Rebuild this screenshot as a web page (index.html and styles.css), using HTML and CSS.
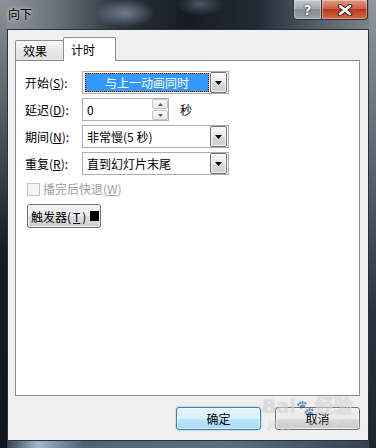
FILE: index.html
```html
<!doctype html>
<html lang="zh-CN">
<head>
    <meta charset="UTF-8">
    <title>向下</title>
    <link rel="stylesheet" href="styles.css">
</head>
<body>
<div class="window">
    <div class="titlebar">
        <span class="title">向下</span>
        <div class="caption">
            <span class="cap-btn cap-help">?</span>
            <span class="cap-btn cap-close">
                <svg width="16" height="12" viewBox="0 0 16 12">
                    <path d="M3 2 L13 10 M13 2 L3 10" stroke="#3a2a26" stroke-width="4.6" stroke-linecap="round"/>
                    <path d="M3 2 L13 10 M13 2 L3 10" stroke="#fff" stroke-width="2.6" stroke-linecap="round"/>
                </svg>
            </span>
        </div>
    </div>

    <div class="client">
        <div class="tabs">
            <div class="tab tab-off">效果</div>
            <div class="tab tab-on">计时</div>
        </div>

        <div class="panel">
            <div class="form">
                <label>开始(<u>S</u>):</label>
                <div class="combo">
                    <div class="combo-value selected">与上一动画同时</div>
                    <span class="drop"><svg width="7" height="4" viewBox="0 0 7 4"><path d="M0 0 H7 L3.5 4 Z" fill="#000"/></svg></span>
                </div>

                <label>延迟(<u>D</u>):</label>
                <div class="field-row">
                    <div class="spin">
                        <span class="spin-value">0</span>
                        <div class="spin-buttons">
                            <span class="spin-btn"><svg width="5" height="3" viewBox="0 0 5 3"><path d="M0 3 H5 L2.5 0 Z" fill="#4d6189"/></svg></span>
                            <span class="spin-btn"><svg width="5" height="3" viewBox="0 0 5 3"><path d="M0 0 H5 L2.5 3 Z" fill="#4d6189"/></svg></span>
                        </div>
                    </div>
                    <span class="unit">秒</span>
                </div>

                <label>期间(<u>N</u>):</label>
                <div class="combo">
                    <div class="combo-value">非常慢(5 秒)</div>
                    <span class="drop"><svg width="7" height="4" viewBox="0 0 7 4"><path d="M0 0 H7 L3.5 4 Z" fill="#000"/></svg></span>
                </div>

                <label>重复(<u>R</u>):</label>
                <div class="combo">
                    <div class="combo-value">直到幻灯片末尾</div>
                    <span class="drop"><svg width="7" height="4" viewBox="0 0 7 4"><path d="M0 0 H7 L3.5 4 Z" fill="#000"/></svg></span>
                </div>
            </div>

            <div class="check disabled">
                <span class="box"></span>
                <span>播完后快退(<u>W</u>)</span>
            </div>

            <button class="btn trigger" type="button">触发器(<u>T</u>) <span class="swatch"></span></button>
        </div>

        <div class="actions">
            <button class="btn btn-default" type="button">确定</button>
            <button class="btn" type="button">取消</button>
        </div>
    </div>

    <div class="watermark">Bai<span class="paw">&#x1F43E;</span>经验<small>jingyan.baidu.com</small></div>
</div>
</body>
</html>
```

FILE: styles.css
```css
* {
    box-sizing: border-box;
}

body {
    margin: 0;
    font-family: "Noto Sans CJK SC", "Microsoft YaHei", sans-serif;
    font-size: 12px;
    color: #000;
}

u {
    text-decoration: underline;
    text-underline-offset: 1px;
}

/* window frame (aero glass) */
.window {
    position: relative;
    width: 376px;
    height: 448px;
    display: flex;
    flex-direction: column;
    background:
        linear-gradient(#8c9298, #4a535c 30%, #161d25 55%, #0f151c) left top / 7px 100% no-repeat,
        linear-gradient(#8e979e, #5c6670 35%, #2a333d 70%, #1c242d) right top / 7px 100% no-repeat,
        linear-gradient(to right, #1c2631, #9fb6cc 10%, #4f6377 22%, #5b6e81 60%, #33414f) left bottom / 100% 7px no-repeat,
        radial-gradient(ellipse 30px 14px at 125px 13px, rgba(170, 190, 210, 0.55), transparent),
        radial-gradient(ellipse 24px 12px at 200px 4px, rgba(150, 170, 190, 0.4), transparent),
        linear-gradient(to right, #8e949a 0%, #6c757e 14%, #2a333d 32%, #141b23 50%, #222b35 68%, #58636d 86%, #7d878f 100%);
}

.titlebar {
    height: 29px;
    flex-shrink: 0;
    display: flex;
    align-items: flex-start;
}

.title {
    margin: 6px 0 0 8px;
    line-height: 16px;
    text-shadow: 0 0 6px rgba(255, 255, 255, 0.7), 0 0 3px rgba(255, 255, 255, 0.6);
}

.caption {
    margin-left: auto;
    margin-right: 8px;
    display: flex;
}

.cap-btn {
    height: 20px;
    display: flex;
    align-items: center;
    justify-content: center;
    border: 1px solid #2a3038;
    border-top: none;
    box-shadow: inset 0 0 0 1px rgba(255, 255, 255, 0.35);
}

.cap-help {
    width: 28px;
    border-right: none;
    border-radius: 0 0 0 4px;
    background: linear-gradient(#c3c9cf, #a2abb3 45%, #838d96 50%, #97a1aa);
    color: #fff;
    font-family: "DejaVu Sans", sans-serif;
    font-weight: bold;
    font-size: 14px;
    text-shadow: 0 0 2px #222, 0 0 1px #222;
}

.cap-close {
    width: 47px;
    border-radius: 0 0 4px 0;
    background: linear-gradient(#e49a88, #cf5e45 45%, #b9381c 50%, #d56a44);
}

/* client area */
.client {
    flex: 1;
    margin: 0 7px 7px 7px;
    background-color: #f0f0f0;
    border: 1px solid #28313b;
    padding: 7px 8px 0 7px;
    display: flex;
    flex-direction: column;
}

.tabs {
    display: flex;
    align-items: flex-end;
    height: 24px;
    margin-bottom: -1px;
    position: relative;
    z-index: 1;
}

.tab {
    border: 1px solid #898c95;
    border-bottom: none;
    display: flex;
    align-items: center;
    padding-left: 7px;
    line-height: 14px;
}

.tab-off {
    width: 48px;
    height: 20px;
    margin-bottom: 1px;
    border-right: none;
    border-radius: 2px 0 0 0;
    background: linear-gradient(#f8f8f8, #e9e9e9 50%, #e1e1e1);
}

.tab-on {
    width: 53px;
    height: 24px;
    background-color: #fff;
    border-radius: 2px 2px 0 0;
}

.panel {
    width: 345px;
    height: 336px;
    border: 1px solid #898c95;
    background-color: #fff;
    padding: 10px 0 0 9px;
}

.form {
    display: grid;
    grid-template-columns: 57px auto;
    row-gap: 4px;
    align-items: center;
}

.form label {
    line-height: 16px;
}

.combo {
    width: 147px;
    height: 23px;
    border: 1px solid #abadb3;
    background-color: #fff;
    display: flex;
    align-items: stretch;
    padding-right: 1px;
}

.combo-value {
    flex: 1;
    display: flex;
    align-items: center;
    padding-left: 4px;
    white-space: nowrap;
}

.combo-value.selected {
    margin: 1px 1px 1px 2px;
    padding-left: 0;
    justify-content: center;
    color: #fff;
    border: 1px dotted #111;
    background: linear-gradient(#3399ff, #3399ff) padding-box, #c98b3e border-box;
}

.drop {
    width: 17px;
    border: 1px solid #707070;
    border-radius: 2px;
    background: linear-gradient(#f7f7f7, #e9e9e9 50%, #d9d9d9 51%, #cecece);
    box-shadow: inset 0 0 0 1px rgba(255, 255, 255, 0.8);
    display: flex;
    align-items: center;
    justify-content: center;
}

.field-row {
    display: flex;
    align-items: center;
    gap: 11px;
}

.spin {
    width: 87px;
    height: 23px;
    border: 1px solid #abadb3;
    background-color: #fff;
    display: flex;
    align-items: stretch;
}

.spin-value {
    flex: 1;
    display: flex;
    align-items: center;
    padding-left: 4px;
}

.spin-buttons {
    width: 16px;
    display: flex;
    flex-direction: column;
    gap: 1px;
}

.spin-btn {
    height: 10px;
    border: 1px solid #c3c6cc;
    border-radius: 2px;
    background: linear-gradient(#fbfbfb, #e8e8e8);
    display: flex;
    align-items: center;
    justify-content: center;
}

.unit {
    line-height: 16px;
}

.check {
    display: flex;
    align-items: center;
    gap: 3px;
    margin: 7px 0 0 2px;
    line-height: 14px;
}

.check.disabled {
    color: #a0a0a0;
}

.box {
    width: 13px;
    height: 13px;
    border: 1px solid #c6c6c6;
    background-color: #f4f4f4;
}

.btn {
    font-family: inherit;
    font-size: 12px;
    color: #000;
    height: 23px;
    width: 85px;
    border: 1px solid #707070;
    border-radius: 3px;
    background: linear-gradient(#f2f2f2, #ebebeb 50%, #dddddd 51%, #cfcfcf);
    box-shadow: inset 0 0 0 1px rgba(255, 255, 255, 0.7);
    padding: 0;
}

.trigger {
    width: 74px;
    height: 24px;
    margin: 8px 0 0 2px;
    display: flex;
    align-items: center;
    padding-left: 3px;
    gap: 2px;
}

.swatch {
    width: 9px;
    height: 10px;
    background-color: #000;
    margin-left: 2px;
}

.actions {
    display: flex;
    justify-content: flex-end;
    gap: 14px;
    margin-top: 11px;
}

.btn-default {
    border-color: #3c7fb1;
    background: linear-gradient(#eaf6fd, #d9f0fc 50%, #bee6fd 51%, #a7d9f5);
    box-shadow: inset 0 0 0 1px rgba(255, 255, 255, 0.6), 0 0 2px #62b6ef;
}

/* site watermark over the buttons */
.watermark {
    position: absolute;
    left: 262px;
    top: 395px;
    font-family: "DejaVu Sans", sans-serif;
    font-size: 19px;
    font-weight: bold;
    color: rgba(255, 255, 255, 0.55);
    text-shadow: 0 0 1px rgba(0, 0, 0, 0.25);
    pointer-events: none;
    line-height: 22px;
}

.watermark .paw {
    font-size: 15px;
}

.watermark small {
    display: block;
    font-size: 10px;
    font-weight: normal;
    line-height: 12px;
    margin-left: 6px;
}
```
